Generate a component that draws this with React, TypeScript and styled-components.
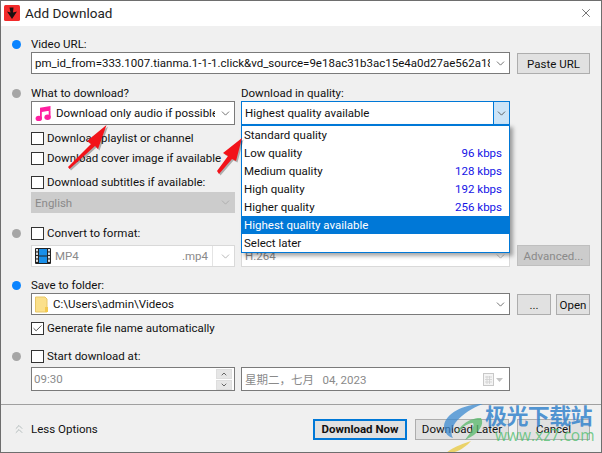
import React from "react";
import styled, { createGlobalStyle } from "styled-components";
import { ChevronDown, ChevronUp, ChevronsUp, X, Check } from "lucide-react";

const Global = createGlobalStyle`
  html, body { margin: 0; padding: 0; background: #f0f0f0; }
  * { box-sizing: border-box; }
`;

const Window = styled.div`
  position: relative; width: 602px; height: 453px; overflow: hidden;
  display: flex; flex-direction: column;
  background: #f0f0f0; border: 1px solid #6e6e6e;
  font-family: Roboto, "Noto Sans CJK SC", sans-serif; font-size: 11.5px; color: #111;
`;
const TitleBar = styled.div`
  height: 25px; background: #fff; display: flex; align-items: center; padding: 0 8px 1px 3px; gap: 5px; flex: none;
`;
const TitleText = styled.div`flex: 1; font-size: 13.5px; color: #222;`;
const Body = styled.div`flex: 1; padding: 11px 11px 0 11px; display: flex; flex-direction: column;`;
const Section = styled.section<{ $top: number }>`
  display: grid; grid-template-columns: 19px 204px 275px 80px; margin-top: ${p => p.$top}px;
`;
const DotCell = styled.div`padding-top: 3px; display: flex; justify-content: flex-start;`;
const Dot = styled.span<{ $on?: boolean }>`
  width: 9px; height: 9px; border-radius: 50%; background: ${p => (p.$on ? "#0a84ff" : "#a6a6a6")};
`;
const Col = styled.div<{ $span?: number }>`
  display: flex; flex-direction: column; min-width: 0;
  grid-column: span ${p => p.$span || 1};
`;
const RightCol = styled(Col)`margin-left: 6px;`;
const SideCol = styled(Col)`margin-left: 7px;`;
const Label = styled.div`height: 15px; line-height: 14px; white-space: nowrap;`;
const Field = styled.div<{ $h: number; $focus?: boolean; $off?: boolean; $fade?: boolean; $solid?: boolean }>`
  position: relative; height: ${p => p.$h}px; flex: none;
  display: flex; align-items: center; gap: 4px; padding: 0 3px;
  background: ${p => (p.$off ? "#cccccc" : "#fff")};
  color: ${p => (p.$off || p.$fade ? "#8a8a8a" : "#111")};
  border: 1px solid ${p => (p.$focus ? "#0078d7" : p.$off ? "#cccccc" : p.$solid ? "#7a7a7a" : p.$fade ? "#d9d9d9" : "#7a7a7a")};
  white-space: nowrap;
`;
const FieldText = styled.span`flex: 1; min-width: 0; overflow: hidden; white-space: nowrap;`;
const Caret = styled(ChevronDown)<{ $fade?: boolean }>`
  flex: none; width: 13px; height: 13px; margin-right: -1px; color: ${p => (p.$fade ? "#a8a8a8" : "#555")}; stroke-width: 1.5;
`;
const CaretBox = styled.span`
  align-self: stretch; width: 16px; margin: 0 -3px 0 0; flex: none; display: flex; align-items: center; justify-content: center;
  background: #cce4f7; border-left: 1px solid #0078d7; color: #444;
`;
const PlainCaret = styled(ChevronDown)`width: 13px; height: 13px; stroke-width: 1.5;`;
const CheckRow = styled.label<{ $top: number }>`
  display: flex; align-items: center; gap: 3px; height: 14px; margin-top: ${p => p.$top}px; white-space: nowrap;
`;
const Box = styled.span`
  width: 13px; height: 13px; flex: none; background: #fff; border: 1px solid #333; display: flex; align-items: center; justify-content: center;
`;
const Tick = styled(Check)`width: 11px; height: 11px; stroke-width: 1.7; color: #222;`;
const Spacer = styled.div<{ $h: number }>`height: ${p => p.$h}px; flex: none;`;
const Button = styled.div<{ $w?: number; $off?: boolean; $primary?: boolean }>`
  width: ${p => (p.$w ? `${p.$w}px` : "100%")}; height: 21px; flex: none;
  display: flex; align-items: center; justify-content: center; white-space: nowrap;
  background: ${p => (p.$off ? "#cccccc" : "#e1e1e1")}; color: ${p => (p.$off ? "#8a8a8a" : "#111")};
  border: ${p => (p.$primary ? "2px solid #0078d7" : `1px solid ${p.$off ? "#bfbfbf" : "#adadad"}`)};
  font-weight: ${p => (p.$primary ? 700 : 400)};
`;
const ButtonPair = styled.div`display: flex; justify-content: space-between; margin-top: 1px;`;
const PasteWrap = styled.div`margin-top: 16px;`;
const Footer = styled.div`
  margin-top: auto; height: 48px; flex: none; border-top: 1px solid #a0a0a0;
  display: flex; align-items: center; padding: 1px 11px 0 11px; gap: 8px;
`;
const LessOptions = styled.div`flex: 1; display: flex; align-items: center; gap: 5px;`;
const LessIcon = styled(ChevronsUp)`width: 14px; height: 14px; color: #8a9a9a; stroke-width: 1;`;
const Dropdown = styled.div`
  position: absolute; left: -1px; right: -1px; top: 100%; z-index: 3;
  background: #fff; border: 1px solid #0078d7; border-top-width: 2px;
  box-shadow: 3px 3px 4px rgba(0,0,0,.35); color: #111;
`;
const Option = styled.div<{ $sel?: boolean }>`
  height: 18px; display: flex; align-items: center; justify-content: space-between; padding: 0 7px 0 2px;
  background: ${p => (p.$sel ? "#0078d7" : "transparent")}; color: ${p => (p.$sel ? "#fff" : "#111")};
`;
const Rate = styled.span`color: #1414e6;`;
const TimeText = styled.span`flex: 1; margin-left: -1px;`;
const Spinner = styled.span`
  width: 16px; align-self: stretch; margin: 1px -1px 1px 0; display: flex; flex-direction: column; gap: 1px; flex: none;
`;
const SpinBtn = styled.span`
  flex: 1; background: #e6e6e6; border: 1px solid #dedede; display: flex; align-items: center; justify-content: center; color: #666;
`;
const CalendarWrap = styled.span`flex: none; display: flex; margin-right: 3px;`;
const Annotations = styled.svg`position: absolute; left: -1px; top: -1px; z-index: 5; pointer-events: none;`;
const Mark = styled.div`position: absolute; left: 484px; top: 402px; z-index: 6; pointer-events: none; line-height: 1;`;
const MarkCn = styled.div`font-family: "Noto Sans CJK SC", sans-serif; font-weight: 700; font-size: 22px; letter-spacing: -0.6px; color: rgba(59,135,205,.88); white-space: nowrap;`;
const MarkUrl = styled.div`font-family: "Open Sans", sans-serif; font-size: 15.5px; color: rgba(80,190,110,.78); white-space: nowrap; margin: 3px 0 0 10px;`;
const MarkSwirl = styled.svg`position: absolute; left: -42px; top: 1px;`;
const Divider = styled.div`width: 1px; height: 20px; background: #e4e4e4; flex: none; margin-right: 2px;`;

const AppIcon = () => (
  <svg width="16" height="16" viewBox="0 0 16 16">
    <rect width="16" height="16" rx="1.5" fill="#f22a2a" />
    <path d="M5.5 2.5 L9.5 2.5 L9 7.5 L13 6.5 L8 14 L3 6.5 L6.5 7.5 Z" fill="#1a1010" />
  </svg>
);
const Music = () => (
  <svg width="17" height="17" viewBox="0 0 17 17">
    <path d="M5 2.8 L15.5 1 V5.6 L6.8 7 V13 H5 Z M13.7 5 H15.5 V12 H13.7 Z" fill="#ff1fa0" />
    <ellipse cx="3.8" cy="13.4" rx="3.2" ry="2.7" fill="#ff1fa0" />
    <ellipse cx="12.6" cy="12.2" rx="3.2" ry="2.7" fill="#ff1fa0" />
  </svg>
);
const Film = () => (
  <svg width="16" height="16" viewBox="0 0 16 16">
    <rect width="16" height="16" rx="1" fill="#222" />
    <rect x="4" y="1" width="8" height="6.5" fill="#1a8fe8" />
    <rect x="4" y="8.5" width="8" height="6.5" fill="#1a8fe8" />
    {[1, 4.5, 8, 11.5].map(y => (
      <React.Fragment key={y}>
        <rect x="1" y={y} width="2" height="2.4" fill="#ddd" />
        <rect x="13" y={y} width="2" height="2.4" fill="#ddd" />
      </React.Fragment>
    ))}
  </svg>
);
const Folder = () => (
  <svg width="14" height="17" viewBox="0 0 14 17">
    <path d="M0.5 1 H10 L12 3 V16 H0.5 Z" fill="#fbe08a" stroke="#e8c768" />
    <rect x="10" y="11" width="3" height="5" fill="#f3c94f" />
  </svg>
);
const Calendar = () => (
  <svg width="20" height="13" viewBox="0 0 20 13">
    <rect x="0.5" y="0.5" width="10" height="12" fill="#f4f4f4" stroke="#c8c8c8" />
    <path d="M2 4h7M2 6.5h7M2 9h7M4 3v8M6.5 3v8" stroke="#cfcfcf" strokeWidth=".8" />
    <path d="M13 5h7l-3.5 4z" fill="#c4c4c4" />
  </svg>
);
const Arrow = ({ d }: { d: string }) => (
  <>
    <path d={d} fill="#000" opacity=".28" transform="translate(1.5 1.5)" />
    <path d={d} fill="#f2131a" />
  </>
);

export default function App() {
  return (
    <Window>
      <Global />
      <TitleBar>
        <AppIcon />
        <TitleText>Add Download</TitleText>
        <X size={14} strokeWidth={1} color="#111" />
      </TitleBar>
      <Body>
        <Section $top={0}>
          <DotCell><Dot $on /></DotCell>
          <Col $span={2}>
            <Label>Video URL:</Label>
            <Field $h={22}>
              <FieldText>pm_id_from=333.1007.tianma.1-1-1.click&amp;vd_source=9e18ac31b3ac15e4a0d27ae562a1826a</FieldText>
              <Caret />
            </Field>
          </Col>
          <SideCol>
            <PasteWrap><Button>Paste URL</Button></PasteWrap>
          </SideCol>
        </Section>

        <Section $top={12}>
          <DotCell><Dot /></DotCell>
          <Col>
            <Label>What to download?</Label>
            <Field $h={24}>
              <Music />
              <FieldText>Download only audio if possible</FieldText>
              <Caret />
            </Field>
            <CheckRow $top={6}><Box />Download playlist or channel</CheckRow>
            <CheckRow $top={6}><Box />Download cover image if available</CheckRow>
            <CheckRow $top={10}><Box />Download subtitles if available:</CheckRow>
            <Spacer $h={3} />
            <Field $h={21} $off>
              <FieldText>English</FieldText>
              <Caret $fade />
            </Field>
          </Col>
          <RightCol>
            <Label>Download in quality:</Label>
            <Field $h={24} $focus>
              <FieldText>Highest quality available</FieldText>
              <CaretBox><PlainCaret /></CaretBox>
              <Dropdown>
                <Option>Standard quality</Option>
                <Option>Low quality<Rate>96 kbps</Rate></Option>
                <Option>Medium quality<Rate>128 kbps</Rate></Option>
                <Option>High quality<Rate>192 kbps</Rate></Option>
                <Option>Higher quality<Rate>256 kbps</Rate></Option>
                <Option $sel>Highest quality available</Option>
                <Option>Select later</Option>
              </Dropdown>
            </Field>
          </RightCol>
        </Section>

        <Section $top={13}>
          <DotCell><Dot /></DotCell>
          <Col>
            <CheckRow $top={0}><Box />Convert to format:</CheckRow>
            <Spacer $h={5} />
            <Field $h={22} $fade>
              <Film />
              <FieldText>MP4</FieldText>
              <span>.mp4</span>
              <Divider />
              <Caret $fade />
            </Field>
          </Col>
          <RightCol>
            <Spacer $h={19} />
            <Field $h={22} $fade>
              <FieldText>H.264</FieldText>
              <Caret $fade />
            </Field>
          </RightCol>
          <SideCol>
            <Spacer $h={19} />
            <Button $off>Advanced...</Button>
          </SideCol>
        </Section>

        <Section $top={11}>
          <DotCell><Dot $on /></DotCell>
          <Col $span={2}>
            <Label>Save to folder:</Label>
            <Field $h={22}>
              <Folder />
              <FieldText>C:\Users\admin\Videos</FieldText>
              <Caret />
            </Field>
            <CheckRow $top={6}><Box><Tick /></Box>Generate file name automatically</CheckRow>
          </Col>
          <SideCol>
            <Spacer $h={15} />
            <ButtonPair>
              <Button $w={34}>...</Button>
              <Button $w={34}>Open</Button>
            </ButtonPair>
          </SideCol>
        </Section>

        <Section $top={14}>
          <DotCell><Dot /></DotCell>
          <Col>
            <CheckRow $top={0}><Box />Start download at:</CheckRow>
            <Spacer $h={4} />
            <Field $h={24} $fade $solid>
              <TimeText>09:30</TimeText>
              <Spinner>
                <SpinBtn><ChevronUp size={8} strokeWidth={3} /></SpinBtn>
                <SpinBtn><ChevronDown size={8} strokeWidth={3} /></SpinBtn>
              </Spinner>
            </Field>
          </Col>
          <RightCol>
            <Spacer $h={18} />
            <Field $h={24} $fade $solid>
              <FieldText>星期二，七月&nbsp;&nbsp;&nbsp;04, 2023</FieldText>
              <CalendarWrap><Calendar /></CalendarWrap>
            </Field>
          </RightCol>
        </Section>
      </Body>
      <Footer>
        <LessOptions><LessIcon />Less Options</LessOptions>
        <Button $w={94} $primary>Download Now</Button>
        <Button $w={94}>Download Later</Button>
        <Button $w={73}>Cancel</Button>
      </Footer>

      <Annotations width="602" height="453" viewBox="0 0 602 453">
        <Arrow d="M106.5 125 L87 141 L91 144 L68 167 L69.5 169 L95 146 L98 149 Z" />
        <Arrow d="M242 138 L223 153 L228 156 L217 171 L219 174 L232 159 L236 161 Z" />
      </Annotations>

      <Mark>
        <MarkSwirl width="42" height="50" viewBox="0 0 42 50">
          <path d="M40 0 C20 0 2 10 1 22 C1 28 4 32 10 34 C4 24 18 8 40 0 Z" fill="#3b8ad0" opacity=".75" />
          <path d="M14 30 C16 20 30 13 38 14 C42 20 36 30 22 36 C28 28 32 22 30 19 C24 19 18 24 14 30 Z" fill="#57b86a" opacity=".75" />
          <path d="M3 49 C12 42 20 40 28 37 C22 44 12 50 3 49 Z" fill="#e8c83c" opacity=".75" />
        </MarkSwirl>
        <MarkCn>极光下载站</MarkCn>
        <MarkUrl>www.xz7.com</MarkUrl>
      </Mark>
    </Window>
  );
}
